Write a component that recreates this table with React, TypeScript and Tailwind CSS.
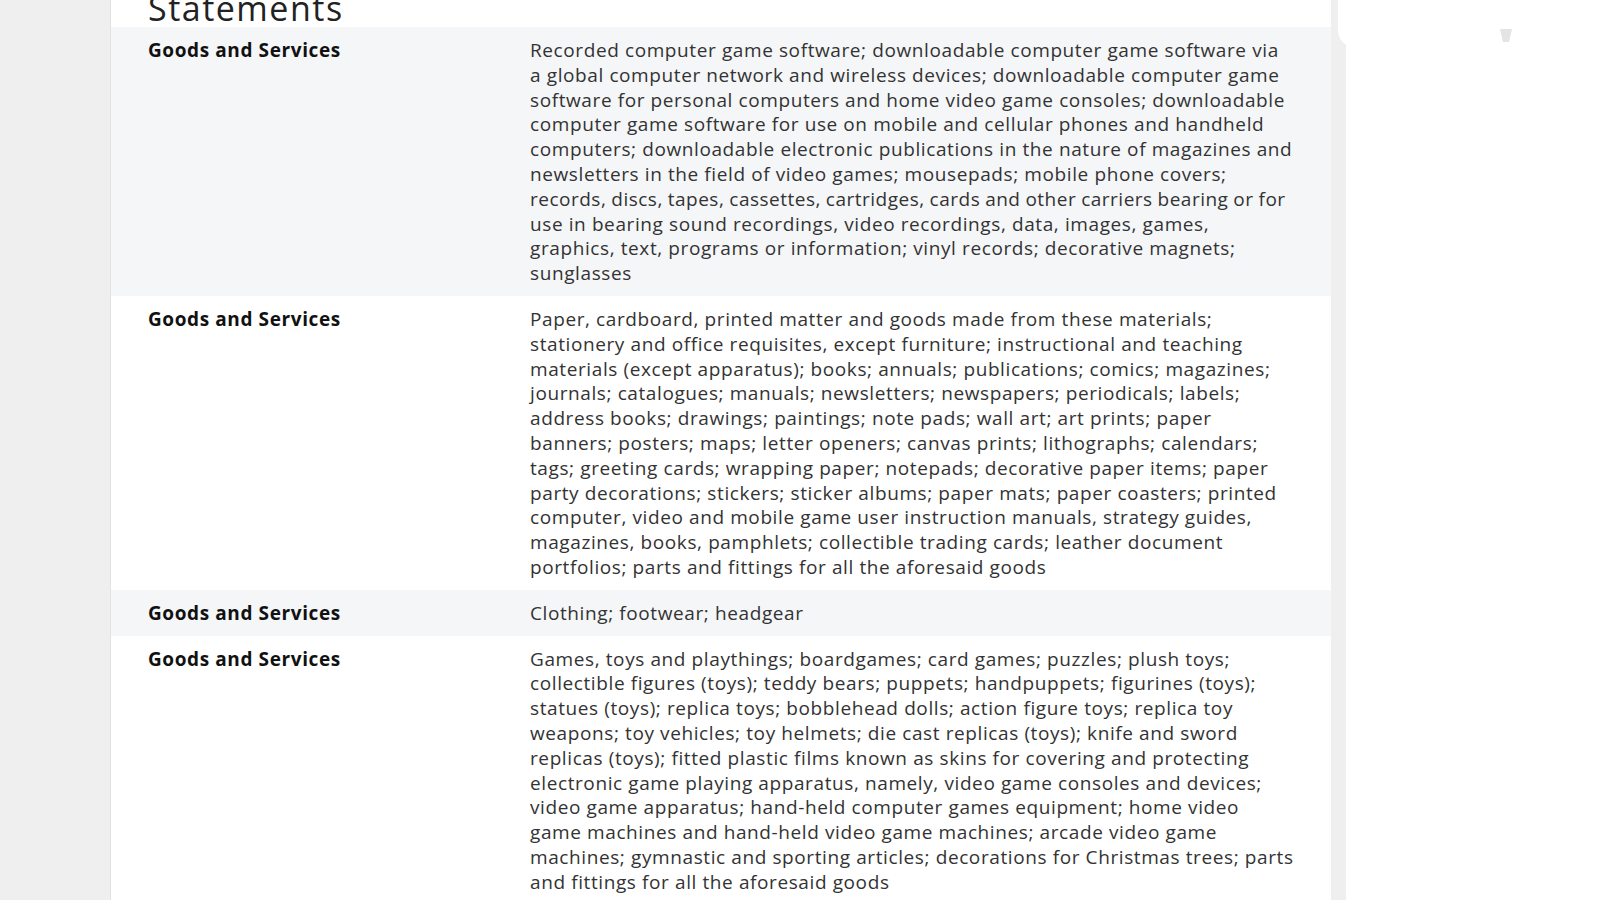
import type { ReactNode } from "react";

const rows: { label: string; text: ReactNode }[] = [
  {
    label: "Goods and Services",
    text: (
      <>
        Recorded computer game software; downloadable computer game software via
        a{"\u00a0"}global computer network and wireless devices; downloadable
        computer game software for personal computers and home video game
        consoles; downloadable computer game software for use on mobile and
        cellular phones and handheld computers; downloadable electronic
        publications in the nature of magazines and newsletters in the field of
        video games; mousepads; mobile phone covers;{" "}
        <span className="tracking-[0.5px] [word-spacing:-0.5px]">
          records, discs, tapes, cassettes, cartridges, cards and other carriers
          bearing or for
        </span>{" "}
        use in bearing sound recordings, video recordings, data, images, games,
        graphics, text, programs or information; vinyl records; decorative
        magnets; sunglasses
      </>
    ),
  },
  {
    label: "Goods and Services",
    text: "Paper, cardboard, printed matter and goods made from these materials; stationery and office requisites, except furniture; instructional and teaching materials (except apparatus); books; annuals; publications; comics; magazines; journals; catalogues; manuals; newsletters; newspapers; periodicals; labels; address books; drawings; paintings; note pads; wall art; art prints; paper banners; posters; maps; letter openers; canvas prints; lithographs; calendars; tags; greeting cards; wrapping paper; notepads; decorative paper items; paper party decorations; stickers; sticker albums; paper mats; paper coasters; printed computer, video and mobile game user instruction manuals, strategy guides, magazines, books, pamphlets; collectible trading cards; leather document portfolios; parts and fittings for all the aforesaid goods",
  },
  {
    label: "Goods and Services",
    text: "Clothing; footwear; headgear",
  },
  {
    label: "Goods and Services",
    text: "Games, toys and playthings; boardgames; card games; puzzles; plush toys; collectible figures (toys); teddy bears; puppets; handpuppets; figurines (toys); statues (toys); replica toys; bobblehead dolls; action figure toys; replica toy weapons; toy vehicles; toy helmets; die cast replicas (toys); knife and sword replicas (toys); fitted plastic films known as skins for covering and protecting electronic game playing apparatus, namely, video game consoles and devices; video game apparatus; hand-held computer games equipment; home video game machines and hand-held video game machines; arcade video game machines; gymnastic and sporting articles; decorations for Christmas trees; parts and fittings for all the aforesaid goods",
  },
];

export default function App() {
  return (
    <div className="flex h-[900px] w-[1600px] overflow-hidden bg-white font-['Open_Sans',sans-serif]">
      <div className="w-[110px] shrink-0 bg-[#efefef]" />

      <div className="w-[1221px] shrink-0 border-l border-[#e2e2e2]">
        <div className="h-[27px] overflow-hidden bg-white pl-[37px]">
          <h2 className="-mt-[9px] text-[34px] leading-[34px] font-medium tracking-[1.5px] text-[#222]">
            Statements
          </h2>
        </div>
        {rows.map((r, i) => (
          <div
            key={i}
            className={`flex pt-[11px] pb-[10px] pl-[37px] ${
              i % 2 === 0 ? "bg-[#f5f6f8]" : "bg-white"
            }`}
          >
            <div className="w-[382px] shrink-0 text-[19px] leading-[24.8px] font-bold tracking-[0.6px] text-[#111]">
              {r.label}
            </div>
            <div className="w-[765px] text-[19px] leading-[24.8px] tracking-[0.6px] text-[#333]">
              {r.text}
            </div>
          </div>
        ))}
      </div>

      <div className="relative w-[15px] shrink-0 bg-[#efefef]">
        <div className="absolute top-[669px] left-[15px] h-[12px] w-[14px] bg-[#efefef]" />
      </div>

      <div className="relative flex-1 bg-white">
        <div className="absolute -left-[8px] top-0 h-[48px] w-[120px] rounded-bl-[18px] bg-white" />
        <svg
          className="absolute left-[154px] top-[29px]"
          width="12"
          height="13"
          viewBox="0 0 12 13"
        >
          <path d="M0 0 H12 L9 13 H3 Z" fill="#e4e4e4" />
        </svg>
      </div>
    </div>
  );
}
